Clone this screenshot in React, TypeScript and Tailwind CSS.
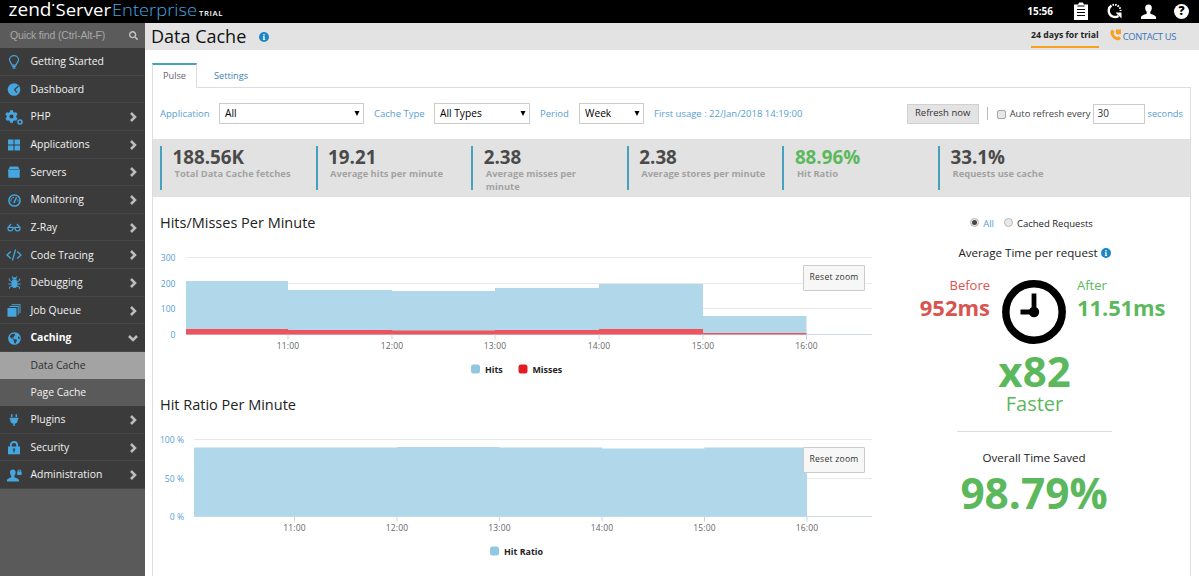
import type { ReactNode } from 'react';
import { FaCog, FaGlobeAmericas, FaPlug, FaSearch, FaInfo } from 'react-icons/fa';

type MenuItem = { label: string; icon: ReactNode; arrow?: boolean; open?: boolean; children?: string[] };

const BLUE = '#45a6e0';

const icons: Record<string, ReactNode> = {
  bulb: (
    <svg width="12" height="14" viewBox="0 0 12 14" fill="none" stroke={BLUE} strokeWidth="1.2">
      <path d="M4 10.2C4 8.3 1.5 7.2 1.5 4.8a4.5 4.2 0 0 1 9 0C10.5 7.2 8 8.3 8 10.2Z" />
      <path d="M4.2 11.6h3.6M4.8 13.2h2.4" />
    </svg>
  ),
  dashboard: (
    <svg width="14" height="13" viewBox="0 0 14 13">
      <circle cx="7" cy="6.5" r="6.3" fill={BLUE} />
      <path d="M11.5 3 7.6 6.6 9.8 9.6" fill="none" stroke="#3b3b3b" strokeWidth="1.1" />
    </svg>
  ),
  php: (
    <span className="relative block h-[15px] w-[18px]">
      <FaCog className="text-[13px]" />
      <svg className="absolute right-0 bottom-0" width="6" height="6" viewBox="0 0 6 6" fill="none" stroke={BLUE}>
        <circle cx="3" cy="3" r="2" strokeWidth="1.6" />
      </svg>
    </span>
  ),
  apps: (
    <svg width="12" height="12" viewBox="0 0 12 12" fill={BLUE}>
      <path d="M0 .5h5.5v5H0zM6.5.5H12v5H6.5zM0 6.5h5.5v5H0zM6.5 6.5H12v5H6.5z" />
    </svg>
  ),
  servers: (
    <svg width="12" height="12" viewBox="0 0 12 12" fill={BLUE}>
      <path d="M2 .5h8L11.5 3H.5zM0 3.4h12v1.8H.5V11.5h11V5.2H0z" />
      <path d="M.5 5.6h11V11.5H.5z" />
    </svg>
  ),
  monitoring: (
    <svg width="13" height="13" viewBox="0 0 13 13" fill="none" stroke={BLUE}>
      <circle cx="6.5" cy="6.5" r="5.6" strokeWidth="1.5" />
      <path d="M8.6 3.3 6.3 8" strokeWidth="1.5" />
      <path d="M3 7.5a3.6 3.6 0 0 1 3-4.2M9.8 5.5a4 4 0 0 1 .2 2" strokeWidth="1" />
      <circle cx="6.2" cy="8.2" r="1" fill={BLUE} stroke="none" />
    </svg>
  ),
  zray: (
    <svg width="14" height="9" viewBox="0 0 14 9" fill="none" stroke={BLUE} strokeWidth="1.2">
      <path d="M1 4.3h4.8v1.2a2.3 2.3 0 0 1-4.8 0zM8.2 4.3H13v1.2a2.3 2.3 0 0 1-4.8 0zM5.800 4.8h2.4" />
      <path d="M1.2 4.3 4 1M12.8 4.3 10 1" />
    </svg>
  ),
  code: (
    <svg width="16" height="12" viewBox="0 0 16 12" fill="none" stroke={BLUE} strokeWidth="1.3">
      <path d="M4.8 2.500 1 6l3.800 3.500M11.2 2.500 15 6l-3.800 3.500M9.600.5 6.400 11.500" />
    </svg>
  ),
  bug: (
    <svg width="13" height="13" viewBox="0 0 13 13" fill="none" stroke={BLUE} strokeWidth="1">
      <ellipse cx="6.5" cy="7.8" rx="3" ry="4.2" fill={BLUE} stroke="none" />
      <path d="M4.2 3.6a2.3 2.3 0 0 1 4.6 0z" fill={BLUE} stroke="none" />
      <path d="M4 5.8 1.3 4.3V2.5M9 5.8l2.7-1.5V2.5M3.8 8H.3M9.2 8h3.5M4 10l-2.5 1v1.7M9 10l2.5 1v1.7M5.2 2 4.2.3M7.8 2l1-1.7" />
    </svg>
  ),
  queue: (
    <svg width="14" height="13" viewBox="0 0 14 13">
      <path d="M4.5.3H13.5V9h-1V1.3h-8zM2.5 2h9.2v8.8h-1V3H2.5z" fill={BLUE} />
      <path d="M.5 4h9v8.7h-9z" fill={BLUE} />
    </svg>
  ),
  globe: <FaGlobeAmericas className="text-[13px]" />,
  plug: <FaPlug className="text-[12px]" />,
  lock: (
    <svg width="12" height="14" viewBox="0 0 12 14">
      <path d="M2.8 6V4.2a3.2 3.2 0 0 1 6.4 0V6" fill="none" stroke={BLUE} strokeWidth="1.8" />
      <path d="M0 5.5h12V13.3H0z" fill={BLUE} />
      <circle cx="6" cy="8.5" r="1.2" fill="#2f4d63" />
      <path d="M5.4 8.5h1.2v3H5.4z" fill="#2f4d63" />
    </svg>
  ),
  admin: (
    <svg width="15" height="13" viewBox="0 0 15 13" fill={BLUE}>
      <path d="M5.8.5c2.2 0 3 1.5 2.8 3.2-.1 1.4-.7 2.3-1.2 2.9v1.6c1 .9 4.6 1.2 4.6 3.1v1.2H0v-1.2c0-1.9 3.2-2.2 4.2-3.1V6.6C3.7 6 3.1 5.1 3 3.7 2.8 2 3.6.5 5.8.5Z" />
      <path d="M10.2 2.5h4.4V6h-4.4z" />
      <path d="M11.2 3V1.2h2.5V3" fill="none" stroke={BLUE} strokeWidth=".9" />
    </svg>
  ),
};

const menu: MenuItem[] = [
  { label: 'Getting Started', icon: icons.bulb },
  { label: 'Dashboard', icon: icons.dashboard },
  { label: 'PHP', icon: icons.php, arrow: true },
  { label: 'Applications', icon: icons.apps, arrow: true },
  { label: 'Servers', icon: icons.servers, arrow: true },
  { label: 'Monitoring', icon: icons.monitoring, arrow: true },
  { label: 'Z-Ray', icon: icons.zray, arrow: true },
  { label: 'Code Tracing', icon: icons.code, arrow: true },
  { label: 'Debugging', icon: icons.bug, arrow: true },
  { label: 'Job Queue', icon: icons.queue, arrow: true },
  { label: 'Caching', icon: icons.globe, arrow: true, open: true, children: ['Data Cache', 'Page Cache'] },
  { label: 'Plugins', icon: icons.plug, arrow: true },
  { label: 'Security', icon: icons.lock, arrow: true },
  { label: 'Administration', icon: icons.admin, arrow: true },
];

const stats = [
  { value: '188.56K', label: 'Total Data Cache fetches' },
  { value: '19.21', label: 'Average hits per minute' },
  { value: '2.38', label: 'Average misses per minute' },
  { value: '2.38', label: 'Average stores per minute' },
  { value: '88.96%', label: 'Hit Ratio', good: true },
  { value: '33.1%', label: 'Requests use cache' },
];

const hours = ['11:00', '12:00', '13:00', '14:00', '15:00', '16:00'];

function Header() {
  return (
    <header className="flex h-[23px] items-start justify-between bg-black text-white">
      <svg width="240" height="23" fill="#fff">
        <text x="8.5" y="16" fontSize="19" textLength="43" lengthAdjust="spacingAndGlyphs">zend</text>
        <circle cx="53.3" cy="5" r="1.1" />
        <text x="55.5" y="16" fontSize="16.5" textLength="55.5" lengthAdjust="spacingAndGlyphs">Server</text>
        <text x="112" y="16" fontSize="16.5" fontWeight="300" fill={BLUE} textLength="85" lengthAdjust="spacingAndGlyphs">Enterprise</text>
        <text x="199" y="15.5" fontSize="7.8" fontWeight="600" textLength="23.5">TRIAL</text>
      </svg>
      <div className="flex h-[22px] items-center pr-[10px]">
        <span className="mr-[21px] text-[10px] font-bold">15:56</span>
        <svg className="mr-[19px]" width="14" height="18" viewBox="0 0 14 18">
          <path d="M0 2.5h4L5.2.5h3.6L10 2.5h4V18H0z" fill="#fff" />
          <path d="M3.5 4h7M3 7.5h8M3 10.5h8M3 13.5h8" stroke="#000" strokeWidth="1" />
        </svg>
        <svg className="mr-[19px]" width="15" height="16" viewBox="0 0 15 16" fill="none" stroke="#fff">
          <path d="M4.5 2.5A6.2 6.2 0 1 0 11.5 13" strokeWidth="2.4" />
          <path d="M5.5 2A6.2 6.2 0 0 1 13.6 8" strokeWidth="1.9" strokeDasharray="1.6 1" />
          <path d="M8.5 9.5H14.5V15.5z" fill="#fff" stroke="none" />
        </svg>
        <svg className="mr-[18px]" width="15" height="15" viewBox="0 0 15 15" fill="#fff">
          <path d="M7.5.5c2.6 0 3.6 1.8 3.3 4-.2 1.6-.9 2.6-1.5 3.3v1.7c1.2 1.1 5.7 1.5 5.7 3.8V15H0v-1.7c0-2.3 4.5-2.7 5.7-3.8V7.8C5.1 7.1 4.4 6.1 4.2 4.5c-.3-2.2.7-4 3.3-4Z" />
        </svg>
        <span className="flex size-[15px] items-center justify-center rounded-full bg-white text-[12px] font-extrabold text-black">?</span>
      </div>
    </header>
  );
}

function Chevron({ open }: { open?: boolean }) {
  return (
    <svg width="10" height="10" viewBox="0 0 10 10" fill="none" stroke="#bdbdbd" strokeWidth="2.5">
      <path d={open ? 'M1 3l4 4 4-4' : 'M3 1l4 4-4 4'} />
    </svg>
  );
}

function Sidebar() {
  return (
    <aside className="w-[145px] shrink-0 bg-[#5a5a5a] text-[10.4px] text-[#f2f2f2]">
      <div className="flex h-[25px] items-center justify-between bg-[#5b5b5b] pr-[7px] pl-[10px] font-['Liberation_Sans',sans-serif] text-[10.5px] tracking-[-0.15px] text-[#a9a9a9]">
        Quick find (Ctrl-Alt-F)
        <FaSearch className="text-[9px] text-[#c4c4c4]" />
      </div>
      {menu.map((item) => (
        <div key={item.label}>
          <div className="flex h-[27.65px] items-center border-b border-[#464646] bg-[#3b3b3b] pt-px pr-[7px] pl-[4px]">
            <span className="flex w-5 justify-center text-[#45a6e0]">{item.icon}</span>
            <span className={item.open ? 'ml-[6.5px] flex-1 font-bold text-white' : 'ml-[6.5px] flex-1'}>{item.label}</span>
            {item.arrow && <Chevron open={item.open} />}
          </div>
          {item.children?.map((child, i) => (
            <div
              key={child}
              className={`flex h-[27px] items-center pt-px pl-[30.5px] ${i === 0 ? 'bg-[#a3a3a3] text-[#2d2d2d]' : 'bg-[#5a5a5a]'}`}
            >
              {child}
            </div>
          ))}
        </div>
      ))}
    </aside>
  );
}

function InfoBadge() {
  return (
    <span className="inline-flex size-[10px] shrink-0 items-center justify-center rounded-full bg-[#1b87c9] text-white">
      <FaInfo className="text-[6px]" />
    </span>
  );
}

function TitleBar() {
  return (
    <div className="flex h-[27px] justify-between bg-[#e3e3e3] pr-[23px] pl-[6px]">
      <div className="flex items-center pb-px">
        <h1 className="text-[18px] leading-6 text-[#111]">Data Cache</h1>
        <span className="mt-px ml-[13px] flex"><InfoBadge /></span>
      </div>
      <div className="flex">
        <span className="h-[25px] border-b-2 border-[#f9a11b] pt-[5px] text-[8.7px] leading-[14px] font-bold text-[#222]">24 days for trial</span>
        <svg className="mt-[6px] ml-[11px]" width="12" height="12" viewBox="0 0 12 12" fill="#f9a11b">
          <path d="M2.5.5 4.5 3 3.4 4.6c.6 1.6 2 3 3.6 3.7L8.7 7.2 11 9.3c-.7 1.6-2.2 2.3-4 1.9C3.8 10.5 1.2 7.7.5 4.6.2 2.8 1 1 2.5.5Z" />
          <path d="M6 .5h5v4.5H9.5L8.5 6 7.5 5H6z" />
        </svg>
        <span className="ml-px pt-[7px] text-[9.4px] leading-[14px] tracking-[-0.35px] text-[#3b73b9]">CONTACT US</span>
      </div>
    </div>
  );
}

function Select({ value, className }: { value: string; className: string }) {
  return (
    <div className={`flex h-[21px] items-center justify-between border border-[#ccc] pr-[3px] pl-[5px] text-[10.2px] text-black ${className}`}>
      {value}
      <svg width="6" height="5" viewBox="0 0 6 5"><path d="M.5 0h5L3 5z" /></svg>
    </div>
  );
}

function Filters() {
  return (
    <div className="flex h-[51px] items-center pr-[7px] pl-[7px] text-[9.5px] text-[#58a0d3]">
      <span className="w-[59px] pt-px">Application</span>
      <Select value="All" className="w-[145px]" />
      <span className="ml-[10px] w-[60px] pt-px">Cache Type</span>
      <Select value="All Types" className="w-[96px]" />
      <span className="ml-[10px] w-[39px] pt-px">Period</span>
      <Select value="Week" className="w-[65px]" />
      <span className="ml-[10px] pt-px">First usage : 22/Jan/2018 14:19:00</span>
      <div className="ml-auto flex items-center">
        <button className="h-[20px] w-[72px] border border-[#d0d0d0] bg-[#e3e3e3] text-[9.5px] text-[#333]">Refresh now</button>
        <span className="ml-[8px] h-[13px] w-px bg-[#bbb]" />
        <span className="mt-[2px] ml-[9px] size-[9px] rounded-[2px] border border-[#a5a5a5] bg-[#e8e8e8]" />
        <span className="mr-[3px] ml-[4px] pt-px text-[9.4px] text-[#444]">Auto refresh every</span>
        <span className="flex h-[20px] w-[52px] items-center border border-[#ccc] pl-[3px] text-[10px] text-[#333]">30</span>
        <span className="ml-[2px] pt-px text-[9.3px]">seconds</span>
      </div>
    </div>
  );
}

function StatsBar() {
  return (
    <div className="flex h-[58px] bg-[#e2e2e2] pt-[7px] pl-[7px]">
      {stats.map((s, i) => (
        <div key={i} className="flex w-[155.6px]">
          <div className="h-[44px] w-[2px] shrink-0 bg-[#45a1be]" />
          <div className="pt-px pl-[10.5px]">
            <p className={`text-[18.8px] leading-[20px] font-bold ${s.good ? 'text-[#5cb85c]' : 'text-[#4a4a4a]'}`}>{s.value}</p>
            <p className="max-w-[128px] pl-[2px] text-[9.4px] leading-[13px] font-bold text-[#a2a2a2]">{s.label}</p>
          </div>
        </div>
      ))}
    </div>
  );
}

type Series = { color: string; values: number[] };
type ChartProps = {
  left: number;
  grid: { y: number; label: string }[];
  bounds: number[];
  series: Series[];
  legend: { label: string; color: string; x: number }[];
};

// values are the tops of the steps, measured in svg units
function StepChart({ left, grid, bounds, series, legend }: ChartProps) {
  const base = grid[grid.length - 1].y;

  return (
    <div className="relative h-[144px]">
      <svg width="713" height="144" className="block">
        {grid.map((g) => (
          <g key={g.label}>
            <path d={`M${left} ${g.y}H712`} stroke={g.y === base ? '#d3dde8' : '#e6e8ea'} />
            <text x={left === 26 ? 15.5 : 24} y={g.y + 3.5} textAnchor="end" fontSize="8.6" fill="#58a0d3">{g.label}</text>
          </g>
        ))}
        {series.map((s) => (
          <path
            key={s.color}
            d={`M${bounds[0]} ${base}` + s.values.map((v, i) => `V${v}H${bounds[i + 1]}`).join('') + `V${base}Z`}
            fill={s.color}
          />
        ))}
        {hours.map((h, i) => (
          <g key={h}>
            <path d={`M${bounds[i + 1]} ${base}v5`} stroke="#c9d5e3" />
            <text x={bounds[i + 1]} y={base + 14} textAnchor="middle" fontSize="8.5" letterSpacing=".2" fill="#666">{h}</text>
          </g>
        ))}
        {legend.map((l) => (
          <g key={l.label}>
            <rect x={l.x} y={base + 30} width="9" height="9" rx="2.5" fill={l.color} />
            <text x={l.x + 14} y={base + 38} fontSize="8.9" fontWeight="700" fill="#222">{l.label}</text>
          </g>
        ))}
      </svg>
      <button className="absolute top-[29px] right-[8px] h-[26px] w-[62px] rounded-[1px] border border-[#ccc] bg-[#f7f7f7] pb-px text-[8.6px] tracking-[0.25px] text-[#333]">
        Reset zoom
      </button>
    </div>
  );
}

function Charts() {
  return (
    <section className="w-[713px] shrink-0 text-[#222]">
      <h2 className="mt-[16px] text-[14.5px] leading-5">Hits/Misses Per Minute</h2>
      <div className="mt-[3px]">
        <StepChart
          left={26}
          grid={[
            { y: 21.5, label: '300' },
            { y: 47.5, label: '200' },
            { y: 72.5, label: '100' },
            { y: 98.5, label: '0' },
          ]}
          bounds={[26, 128, 232, 335, 439, 543, 646.5]}
          series={[
            { color: '#b0d7ea', values: [45, 54, 55, 52, 48, 80] },
            { color: '#ee545e', values: [93, 94, 94.5, 94, 93, 97] },
          ]}
          legend={[
            { label: 'Hits', color: '#92c7e1', x: 311 },
            { label: 'Misses', color: '#e31b23', x: 358.5 },
          ]}
        />
      </div>
      <h2 className="mt-[15px] text-[14.5px] leading-5">Hit Ratio Per Minute</h2>
      <div className="mt-[3px]">
        <StepChart
          left={34}
          grid={[
            { y: 21.5, label: '100 %' },
            { y: 60.5, label: '50 %' },
            { y: 98.5, label: '0 %' },
          ]}
          bounds={[34, 134.5, 237, 339.5, 442, 544.5, 647]}
          series={[{ color: '#b0d7ea', values: [29.5, 29.5, 29, 29.5, 30.5, 29.5] }]}
          legend={[{ label: 'Hit Ratio', color: '#92c7e1', x: 330 }]}
        />
      </div>
    </section>
  );
}

function Clock() {
  return (
    <svg width="64" height="64" viewBox="0 0 64 64" fill="none" stroke="#000">
      <circle cx="32" cy="32" r="28.2" strokeWidth="7.5" />
      <path d="M32 13.5V32H18.5" strokeWidth="4.8" />
      <circle cx="32" cy="32" r="5.2" fill="#000" stroke="none" />
    </svg>
  );
}

function Radio({ checked }: { checked?: boolean }) {
  return (
    <span className="mb-[3px] flex size-[9px] items-center justify-center rounded-full border border-[#b5b5b5] bg-[#e9e9e9]">
      {checked && <span className="size-[5px] rounded-full bg-[#444]" />}
    </span>
  );
}

function Performance() {
  return (
    <section className="ml-[3px] flex w-[316px] shrink-0 flex-col items-center text-[#222]">
      <div className="mt-[20px] ml-[-5px] flex h-[14px] items-center text-[9.5px]">
        <Radio checked />
        <span className="mr-[10px] ml-[4px] text-[#58a0d3]">All</span>
        <Radio />
        <span className="ml-[4px]">Cached Requests</span>
      </div>
      <p className="mt-[13px] flex h-[18px] items-center gap-[3px] pl-px text-[11.6px]">
        Average Time per request <InfoBadge />
      </p>
      <div className="mt-[18px] flex h-[67px]">
        <div className="mt-[-3px] w-[114px] pr-[12px] text-right text-[#d9534f]">
          <p className="text-[13px] leading-4">Before</p>
          <p className="text-[22px] leading-7 font-bold">952ms</p>
        </div>
        <Clock />
        <div className="mt-[-3px] w-[114px] pl-[11px] text-[#5cb85c]">
          <p className="text-[13px] leading-4">After</p>
          <p className="text-[22px] leading-7 font-bold tracking-[-0.1px]">11.51ms</p>
        </div>
      </div>
      <p className="mt-[2px] pl-px text-[42px] leading-[44px] font-bold text-[#5cb85c]">x82</p>
      <p className="mt-[-1px] pl-px text-[20px] leading-6 text-[#5cb85c]">Faster</p>
      <hr className="mt-[15px] w-[155px] border-[#ddd]" />
      <p className="mt-[17px] text-[11.6px] leading-[18px]">Overall Time Saved</p>
      <p className="mt-[4px] text-[42.4px] leading-[44px] font-bold text-[#5cb85c]">98.79%</p>
    </section>
  );
}

export default function App() {
  return (
    <div className="h-[576px] w-[1199px] overflow-hidden bg-white font-['Open_Sans',sans-serif]">
      <Header />
      <div className="flex h-[553px]">
        <Sidebar />
        <main className="flex min-w-0 flex-1 flex-col">
          <TitleBar />
          <div className="flex flex-1 flex-col pt-[13px] pr-[8px] pl-[7px]">
            {/* Tabs */}
            <div className="flex h-[24px] text-[9.2px]">
              <div className="z-10 mb-[-1px] w-[45px] border-x border-t-2 border-x-[#ddd] border-t-[#45a1be] bg-white pt-[4px] text-center text-[#666]">Pulse</div>
              <div className="ml-[17px] pt-[6px] text-[#3b7fb5]">Settings</div>
            </div>
            <div className="flex-1 border-x border-t border-[#ddd]">
              <Filters />
              <StatsBar />
              <div className="flex pl-[7px]">
                <Charts />
                <Performance />
              </div>
            </div>
          </div>
        </main>
      </div>
    </div>
  );
}
